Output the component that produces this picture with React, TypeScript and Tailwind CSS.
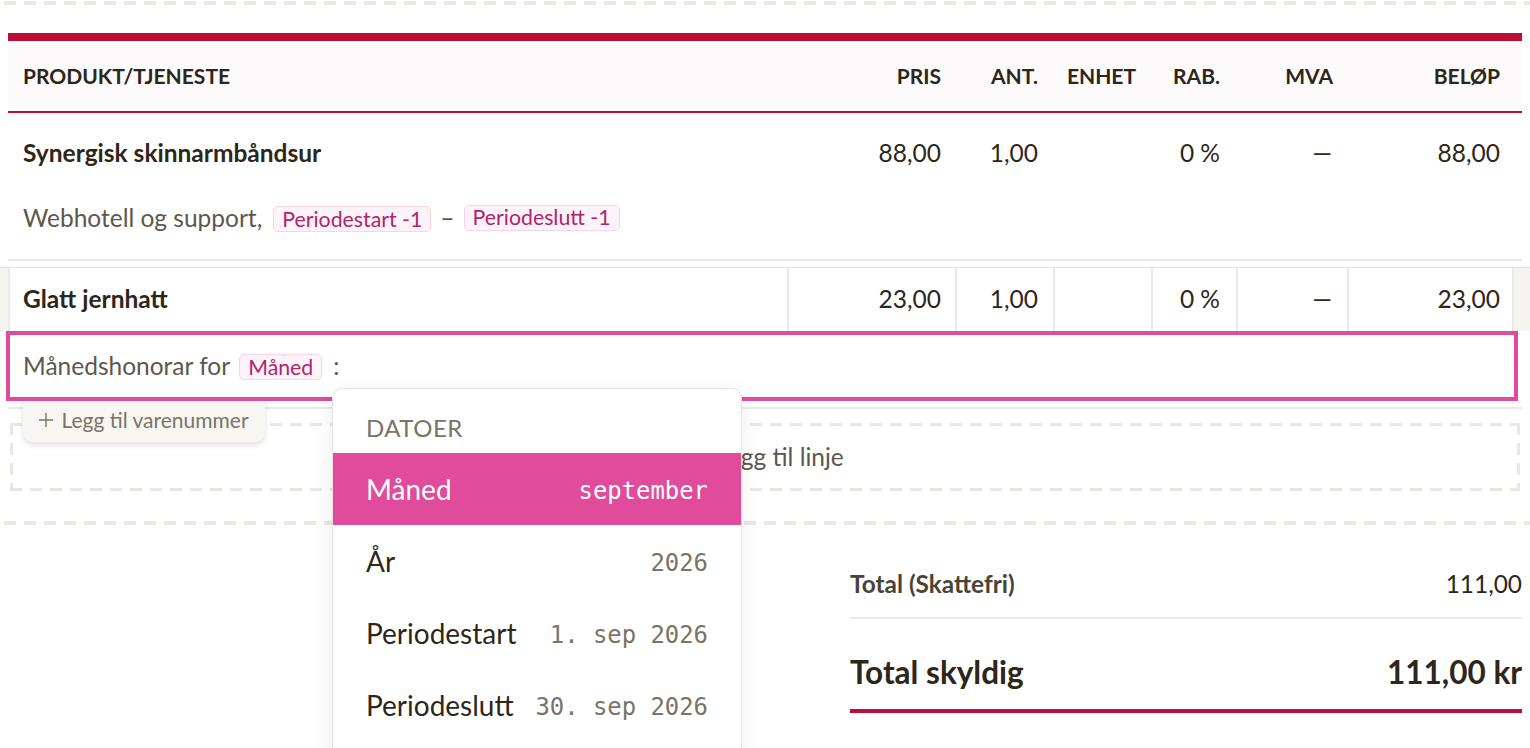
import React from "react";

function Tag({ children }: { children: React.ReactNode }) {
  return (
    <span className="inline-flex h-[26px] items-center rounded-[5px] border border-[#f7d5e6] bg-[#fdf3f8] px-[8px] text-[21.3px] leading-none text-[#b0246f]">
      {children}
    </span>
  );
}

function PlusIcon({ size = 14 }: { size?: number }) {
  return (
    <svg width={size} height={size} viewBox="0 0 14 14" fill="none" stroke="currentColor" strokeWidth="1.4">
      <path d="M7 0v14M0 7h14" />
    </svg>
  );
}

function DropItem({ label, value, active }: { label: string; value: string; active?: boolean }) {
  return (
    <div
      className={
        active
          ? "flex h-[72px] items-center justify-between bg-[#e04b9b] px-[33px] text-white"
          : "flex h-[72px] items-center justify-between px-[33px] text-[#2d2619]"
      }
    >
      <span className="text-[28px]">{label}</span>
      <span
        className={
          active
            ? "mt-[5px] font-['DejaVu_Sans_Mono',monospace] text-[23.9px] text-white"
            : "mt-[5px] font-['DejaVu_Sans_Mono',monospace] text-[23.9px] text-[#7b7466]"
        }
      >
        {value}
      </span>
    </div>
  );
}

export default function App() {
  return (
    <div className="relative h-[748px] w-[1530px] overflow-hidden bg-white font-['Lato',sans-serif] text-[#2d2619]">
      {/* top dashed separator */}
      <div className="ml-[4px] mt-[1px] h-[4px] bg-[repeating-linear-gradient(90deg,#e9e7e2_0px,#e9e7e2_12px,transparent_12px,transparent_20px)]" />

      {/* table header */}
      <div className="mx-[8px] mt-[28px] border-b-2 border-t-[8px] border-[#be0e33] bg-[#fcfafb]">
        <div className="grid h-[70px] grid-cols-[779px_168px_98px_98px_85px_111px_167px] items-center text-[21px] font-bold">
          <div className="pl-[15px]">PRODUKT/TJENESTE</div>
          <div className="pr-[14px] text-right">PRIS</div>
          <div className="pr-[15px] text-right">ANT.</div>
          <div className="pr-[15px] text-right">ENHET</div>
          <div className="pr-[16px] text-right">RAB.</div>
          <div className="pr-[14px] text-right">MVA</div>
          <div className="pr-[14px] text-right">BELØP</div>
        </div>
      </div>

      {/* row 1 */}
      <div className="mx-[8px] border-b-2 border-[#ebe9e5]">
        <div className="grid h-[80px] grid-cols-[779px_168px_98px_98px_85px_111px_167px] items-center text-[24.5px]">
          <div className="pl-[15px] font-bold">Synergisk skinnarmbåndsur</div>
          <div className="pr-[14px] text-right">88,00</div>
          <div className="pr-[15px] text-right">1,00</div>
          <div />
          <div className="pr-[16px] text-right">0 %</div>
          <div className="pr-[15px] text-right">—</div>
          <div className="pr-[14px] text-right">88,00</div>
        </div>
        <div className="flex h-[50px] items-center pl-[15px] text-[24.5px] text-[#5e574b]">
          <span>Webhotell og support,</span>
          <span className="ml-[11px]">
            <Tag>Periodestart -1</Tag>
          </span>
          <span className="mx-[9px]">–</span>
          <Tag>Periodeslutt -1</Tag>
        </div>
        <div className="h-[16px]" />
      </div>

      {/* row 2 (editing) */}
      <div className="mt-[6px] border-t border-[#e4e2dd] bg-[#f4f3f0] px-[8px]">
        <div className="grid h-[63px] grid-cols-[779px_168px_98px_98px_85px_111px_167px] items-stretch text-[24.5px]">
          <div className="flex items-center border-l-2 border-[#ebe9e6] bg-white pl-[13px] font-bold">Glatt jernhatt</div>
          <div className="flex items-center justify-end border-l-2 border-[#ebe9e6] bg-white pr-[14px]">23,00</div>
          <div className="flex items-center justify-end border-l-2 border-[#ebe9e6] bg-white pr-[15px]">1,00</div>
          <div className="border-l-2 border-[#ebe9e6] bg-white" />
          <div className="flex items-center justify-end border-l-2 border-[#ebe9e6] bg-white pr-[16px]">0 %</div>
          <div className="flex items-center justify-end border-l-2 border-[#ebe9e6] bg-white pr-[15px]">—</div>
          <div className="flex items-center justify-end border-x-2 border-[#ebe9e6] bg-white pr-[12px]">23,00</div>
        </div>
      </div>

      {/* description editor */}
      <div className="relative z-10 ml-[6px] mr-[12px] flex h-[70px] items-center border-[4px] border-[#e14b9b] bg-white pl-[13px] text-[24.5px] text-[#5e574b]">
        <span>Månedshonorar for</span>
        <span className="ml-[9px]">
          <Tag>Måned</Tag>
        </span>
        <span className="ml-[11px]">:</span>
      </div>

      <div className="mx-[8px] mt-[6px] h-[2px] bg-[#ebe9e5]" />

      {/* add line dashed box */}
      <div className="mx-[10px] mt-[14px] flex h-[68px] items-center justify-center gap-[10px] text-[24.5px] text-[#5e574b] [background:repeating-linear-gradient(90deg,#e9e7e2_0px,#e9e7e2_12px,transparent_12px,transparent_20px)_top_left/100%_3px_no-repeat,repeating-linear-gradient(90deg,#e9e7e2_0px,#e9e7e2_12px,transparent_12px,transparent_20px)_bottom_left/100%_3px_no-repeat,repeating-linear-gradient(180deg,#e9e7e2_0px,#e9e7e2_12px,transparent_12px,transparent_20px)_top_left/3px_100%_no-repeat,repeating-linear-gradient(180deg,#e9e7e2_0px,#e9e7e2_12px,transparent_12px,transparent_20px)_top_right/3px_100%_no-repeat]">
        <PlusIcon size={16} />
        <span className="ml-[4px]">Legg til linje</span>
      </div>

      {/* dashed separator */}
      <div className="ml-[4px] mt-[30px] h-[4px] bg-[repeating-linear-gradient(90deg,#e9e7e2_0px,#e9e7e2_12px,transparent_12px,transparent_20px)]" />

      {/* totals */}
      <div className="ml-[850px] mr-[8px]">
        <div className="mt-[39px] flex h-[40px] items-center justify-between text-[24.4px]">
          <span className="font-bold text-[#4a4337]">Total (Skattefri)</span>
          <span>111,00</span>
        </div>
        <div className="mt-[13px] h-[2px] bg-[#ebe9e5]" />
        <div className="mt-[29px] flex h-[50px] items-center justify-between text-[31.5px] font-bold">
          <span>Total skyldig</span>
          <span>111,00 kr</span>
        </div>
        <div className="mt-[11px] h-[4px] bg-[#be0e33]" />
      </div>

      {/* add item number tab */}
      <div className="absolute left-[23px] top-[396px] z-[1] flex h-[46px] w-[242px] items-center justify-center gap-[8px] rounded-b-[10px] bg-[#f7f6f3] pt-[2px] text-[21px] text-[#7b7466] shadow-[0_3px_6px_rgba(0,0,0,0.12)]">
        <PlusIcon size={14} />
        <span>Legg til varenummer</span>
      </div>

      {/* dropdown */}
      <div className="absolute left-[332px] top-[388px] z-20 h-[380px] w-[410px] overflow-hidden rounded-[10px] border border-[#e6e4e0] bg-white shadow-[0_4px_20px_rgba(0,0,0,0.08)]">
        <div className="flex h-[64px] items-center pl-[33px] pt-[14px] text-[24px] tracking-[0.02em] text-[#7b7466]">DATOER</div>
        <DropItem label="Måned" value="september" active />
        <DropItem label="År" value="2026" />
        <DropItem label="Periodestart" value="1. sep 2026" />
        <DropItem label="Periodeslutt" value="30. sep 2026" />
      </div>
    </div>
  );
}
